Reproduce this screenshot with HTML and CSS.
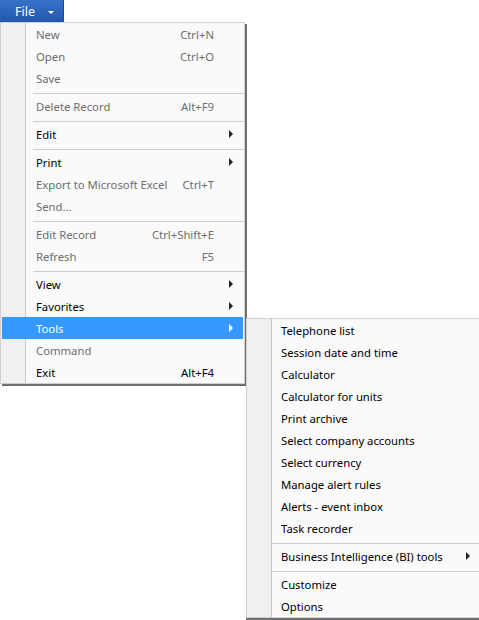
FILE: index.html
```html
<!DOCTYPE html>
<html>
<head>
<meta charset="utf-8">
<link rel="stylesheet" href="styles.css">
</head>
<body>
<div class="bar">
  <div class="file-btn"><span>File</span><span class="caret"></span></div>
</div>
<div class="menu main">
  <div class="item dis"><span class="lbl">New</span><span class="key">Ctrl+N</span></div>
  <div class="item dis"><span class="lbl">Open</span><span class="key">Ctrl+O</span></div>
  <div class="item dis"><span class="lbl">Save</span></div>
  <div class="sep"></div>
  <div class="item dis"><span class="lbl">Delete Record</span><span class="key">Alt+F9</span></div>
  <div class="sep"></div>
  <div class="item"><span class="lbl">Edit</span><span class="arrow"></span></div>
  <div class="sep"></div>
  <div class="item"><span class="lbl">Print</span><span class="arrow"></span></div>
  <div class="item dis"><span class="lbl">Export to Microsoft Excel</span><span class="key">Ctrl+T</span></div>
  <div class="item dis"><span class="lbl">Send...</span></div>
  <div class="sep"></div>
  <div class="item dis"><span class="lbl">Edit Record</span><span class="key">Ctrl+Shift+E</span></div>
  <div class="item dis"><span class="lbl">Refresh</span><span class="key">F5</span></div>
  <div class="sep"></div>
  <div class="item"><span class="lbl">View</span><span class="arrow"></span></div>
  <div class="item"><span class="lbl">Favorites</span><span class="arrow"></span></div>
  <div class="item active"><span class="lbl">Tools</span><span class="arrow"></span></div>
  <div class="item dis"><span class="lbl">Command</span></div>
  <div class="item"><span class="lbl">Exit</span><span class="key">Alt+F4</span></div>
</div>
<div class="menu sub">
  <div class="item"><span class="lbl">Telephone list</span></div>
  <div class="item"><span class="lbl">Session date and time</span></div>
  <div class="item"><span class="lbl">Calculator</span></div>
  <div class="item"><span class="lbl">Calculator for units</span></div>
  <div class="item"><span class="lbl">Print archive</span></div>
  <div class="item"><span class="lbl">Select company accounts</span></div>
  <div class="item"><span class="lbl">Select currency</span></div>
  <div class="item"><span class="lbl">Manage alert rules</span></div>
  <div class="item"><span class="lbl">Alerts - event inbox</span></div>
  <div class="item"><span class="lbl">Task recorder</span></div>
  <div class="sep"></div>
  <div class="item"><span class="lbl">Business Intelligence (BI) tools</span><span class="arrow"></span></div>
  <div class="sep"></div>
  <div class="item"><span class="lbl">Customize</span></div>
  <div class="item"><span class="lbl">Options</span></div>
</div>
</body>
</html>
```
FILE: styles.css
```css
html, body {
  margin: 0;
  padding: 0;
  background: #ffffff;
  overflow: hidden;
  width: 479px;
  height: 620px;
}
body {
  font-family: "Noto Sans", "Open Sans", sans-serif;
  font-size: 11.3px;
  color: #000;
  position: relative;
}
.bar {
  height: 22px;
  display: flex;
}
.file-btn {
  width: 64px;
  height: 22px;
  background: linear-gradient(#3672c9, #2457ad);
  border-right: 1px solid #1c4c99;
  color: #fff;
  display: flex;
  align-items: center;
  box-sizing: border-box;
  padding-left: 15px;
  font-size: 12.5px;
}
.caret {
  margin-left: 13px;
  margin-top: 2px;
  width: 0;
  height: 0;
  border-left: 3px solid transparent;
  border-right: 3px solid transparent;
  border-top: 3px solid #fff;
}
.menu {
  position: absolute;
  box-sizing: border-box;
  border: 1px solid #cfcfcf;
  box-shadow: 2px 2px 0 #6f6f6f;
  background: linear-gradient(to right, #f0f0f0 0, #f0f0f0 24px, #c6c6c6 24px, #c6c6c6 25px, #fafafa 25px, #fafafa 100%);
  display: flex;
  flex-direction: column;
}
.main {
  left: 0;
  top: 22px;
  width: 245px;
}
.sub {
  left: 246px;
  top: 318px;
  width: 236px;
  box-shadow: 0 2px 0 #6f6f6f;
}
.item {
  height: 22px;
  display: flex;
  align-items: center;
  margin: 0 1px;
  padding-left: 34px;
  padding-right: 29px;
  white-space: nowrap;
}
.item .lbl {
  flex: 1;
}
.item .key {
  text-align: right;
}
.dis {
  color: #6d6d6d;
}
.active {
  background: #3399ff;
  color: #fff;
}
.arrow {
  width: 0;
  height: 0;
  border-top: 4px solid transparent;
  border-bottom: 4px solid transparent;
  border-left: 4px solid #222;
  margin-right: -19px;
}
.active .arrow {
  border-left-color: #fff;
}
.sep {
  height: 6px;
  box-sizing: border-box;
  padding-top: 4px;
  margin-left: 32px;
}
.sep::before {
  content: "";
  display: block;
  height: 1px;
  background: #cdcdcd;
}
.sub .item {
  padding-left: 33px;
}
.sub .sep {
  margin-left: 25px;
}
```
